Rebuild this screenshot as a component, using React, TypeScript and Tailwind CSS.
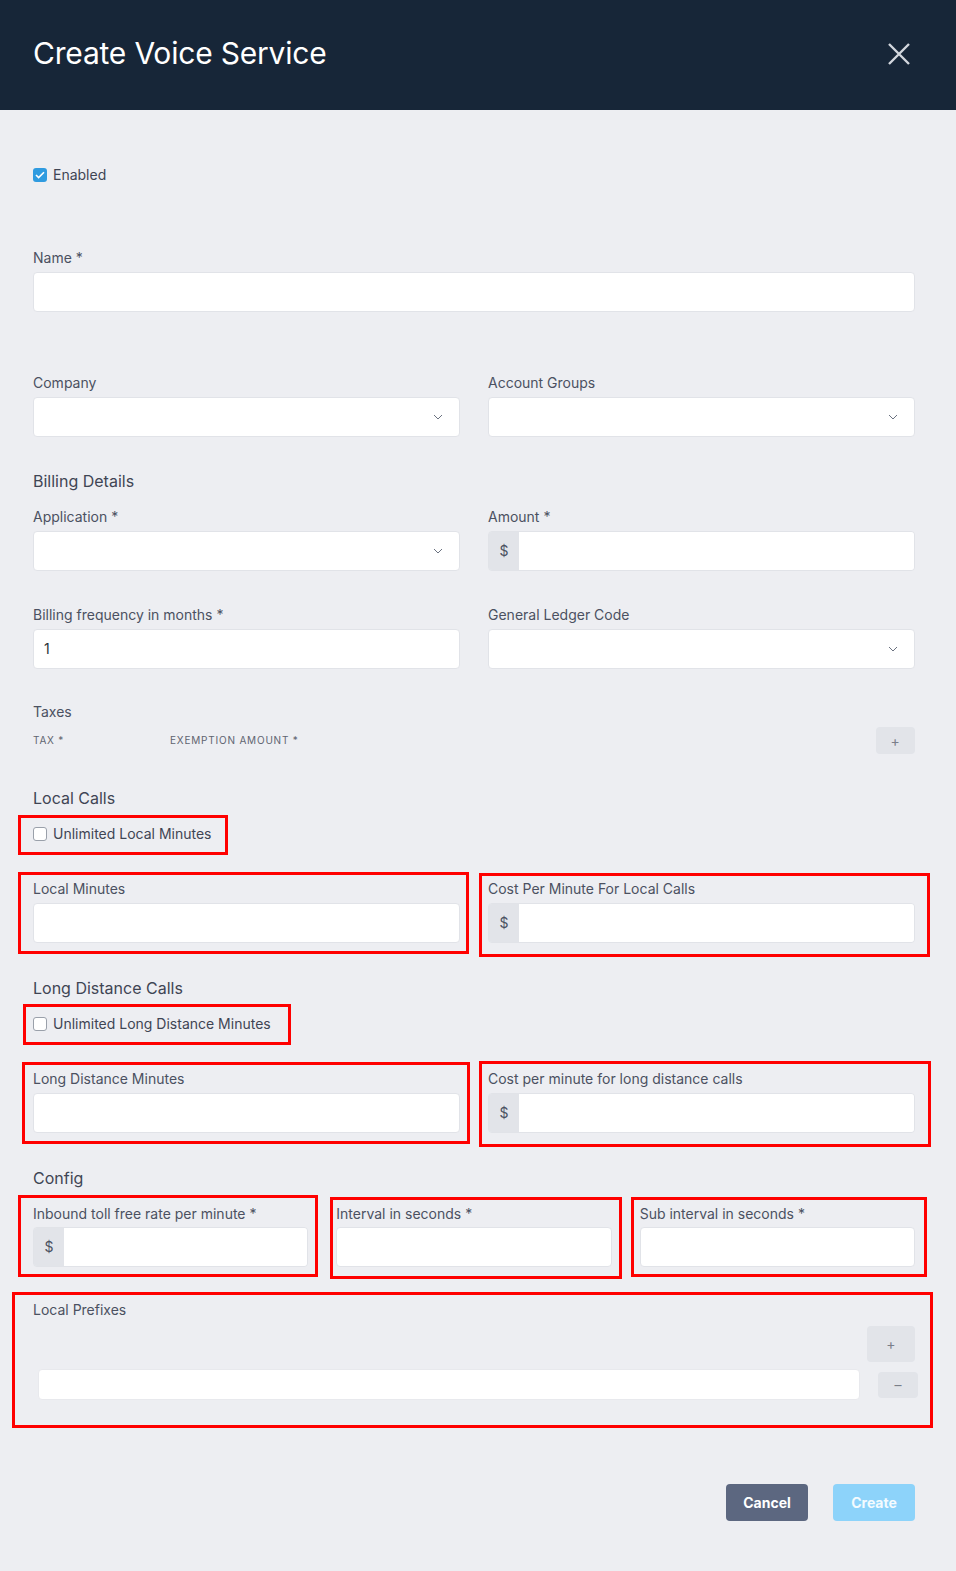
import React from 'react';

const font = { fontFamily: 'Inter, "Noto Sans", sans-serif' };

function Chevron() {
    return (
        <svg width="10" height="6" viewBox="0 0 10 6" className="text-[#6b7280]">
            <path d="M1 1l4 4 4-4" fill="none" stroke="currentColor" strokeWidth="1" />
        </svg>
    );
}

function Label({ children }: { children: React.ReactNode }) {
    return <div className="h-5 text-sm leading-5 text-[#4b5161] mb-1">{children}</div>;
}

function TextInput({ value }: { value?: string }) {
    return (
        <div className="h-10 w-full bg-white border border-[#e1e3e8] rounded flex items-center px-2.5 text-sm text-[#2b2f38]">
            {value}
        </div>
    );
}

function SelectInput() {
    return (
        <div className="h-10 w-full bg-white border border-[#e1e3e8] rounded flex items-center justify-end pr-4">
            <Chevron />
        </div>
    );
}

function MoneyInput() {
    return (
        <div className="h-10 w-full flex rounded border border-[#e1e3e8] overflow-hidden">
            <div className="w-[30px] bg-[#e2e4e9] flex items-center justify-center text-sm text-[#4b5161]">$</div>
            <div className="flex-1 bg-white" />
        </div>
    );
}

function Check({ checked, label }: { checked?: boolean; label: string }) {
    return (
        <div className="flex items-center h-5 gap-1.5 text-sm text-[#3f4554]">
            {checked ? (
                <span className="w-[14px] h-[14px] rounded-[3px] bg-[#2f9be0] flex items-center justify-center">
                    <svg width="10" height="8" viewBox="0 0 10 8">
                        <path d="M1 4l2.6 2.6L9 1.2" fill="none" stroke="white" strokeWidth="1.6" />
                    </svg>
                </span>
            ) : (
                <span className="w-[14px] h-[14px] rounded-[3px] bg-white border border-[#9aa0aa]" />
            )}
            <span>{label}</span>
        </div>
    );
}

function RedBox({ className }: { className: string }) {
    return <div className={`absolute pointer-events-none border-[3px] border-[#ff0000] ${className}`} />;
}

export default function App() {
    return (
        <div className="w-[956px] h-[1571px] bg-[#edeef2]" style={font}>
            <div className="h-[110px] bg-[#172638] flex items-center justify-between pl-[33px] pr-[45px]">
                <h1 className="text-[30px] text-white tracking-[-0.2px] pb-[4px]">Create Voice Service</h1>
                <svg width="24" height="24" viewBox="0 0 24 24" className="mb-[2px]">
                    <path d="M2 2l20 20M22 2L2 22" stroke="#d3d7dd" strokeWidth="2.4" fill="none" />
                </svg>
            </div>

            <div className="pl-[33px] pr-[41px] pt-[55px]">
                <Check checked label="Enabled" />

                <div className="mt-[63px]">
                    <Label>Name *</Label>
                    <TextInput />
                </div>

                <div className="mt-[61px] grid grid-cols-2 gap-7">
                    <div>
                        <Label>Company</Label>
                        <SelectInput />
                    </div>
                    <div>
                        <Label>Account Groups</Label>
                        <SelectInput />
                    </div>
                </div>

                <div className="mt-[32px] h-6 text-base leading-6 text-[#3f4554]">Billing Details</div>

                <div className="mt-[14px] grid grid-cols-2 gap-7">
                    <div>
                        <Label>Application *</Label>
                        <SelectInput />
                    </div>
                    <div>
                        <Label>Amount *</Label>
                        <MoneyInput />
                    </div>
                </div>

                <div className="mt-[34px] grid grid-cols-2 gap-7">
                    <div>
                        <Label>Billing frequency in months *</Label>
                        <TextInput value="1" />
                    </div>
                    <div>
                        <Label>General Ledger Code</Label>
                        <SelectInput />
                    </div>
                </div>

                <div className="mt-[33px] h-5 text-sm leading-5 text-[#4b5161]">Taxes</div>
                <div className="mt-[5px] flex items-center h-[27px] text-[10px] tracking-[0.8px] uppercase text-[#5f6470]">
                    <span className="w-[137px]">Tax *</span>
                    <span className="flex-1">Exemption Amount *</span>
                    <button className="w-[39px] h-[27px] rounded bg-[#e2e4e9] text-[#7a7f8a] text-sm">+</button>
                </div>

                <div className="mt-[32px] h-6 text-base leading-6 text-[#3f4554]">Local Calls</div>
                <div className="mt-[14px] relative w-fit">
                    <Check label="Unlimited Local Minutes" />
                    <RedBox className="-left-[15px] -top-[9px] w-[210px] h-[40px]" />
                </div>

                <div className="mt-[35px] grid grid-cols-2 gap-7">
                    <div className="relative">
                        <Label>Local Minutes</Label>
                        <TextInput />
                        <RedBox className="-left-[15px] -top-[7px] w-[451px] h-[82px]" />
                    </div>
                    <div className="relative">
                        <Label>Cost Per Minute For Local Calls</Label>
                        <MoneyInput />
                        <RedBox className="-left-[9px] -top-[6px] w-[451px] h-[84px]" />
                    </div>
                </div>

                <div className="mt-[33px] h-6 text-base leading-6 text-[#3f4554]">Long Distance Calls</div>
                <div className="mt-[14px] relative w-fit">
                    <Check label="Unlimited Long Distance Minutes" />
                    <RedBox className="-left-[10px] -top-[10px] w-[268px] h-[41px]" />
                </div>

                <div className="mt-[35px] grid grid-cols-2 gap-7">
                    <div className="relative">
                        <Label>Long Distance Minutes</Label>
                        <TextInput />
                        <RedBox className="-left-[11px] -top-[7px] w-[448px] h-[82px]" />
                    </div>
                    <div className="relative">
                        <Label>Cost per minute for long distance calls</Label>
                        <MoneyInput />
                        <RedBox className="-left-[9px] -top-[8px] w-[452px] h-[86px]" />
                    </div>
                </div>

                <div className="mt-[33px] h-6 text-base leading-6 text-[#3f4554]">Config</div>
                <div className="mt-[14px] grid grid-cols-3 gap-7">
                    <div className="relative">
                        <div className="h-5 text-sm leading-5 text-[#4b5161] mb-[3px]">Inbound toll free rate per minute *</div>
                        <MoneyInput />
                        <RedBox className="-left-[15px] -top-[9px] w-[300px] h-[82px]" />
                    </div>
                    <div className="relative">
                        <div className="h-5 text-sm leading-5 text-[#4b5161] mb-[3px]">Interval in seconds *</div>
                        <TextInput />
                        <RedBox className="-left-[6px] -top-[7px] w-[292px] h-[82px]" />
                    </div>
                    <div className="relative">
                        <div className="h-5 text-sm leading-5 text-[#4b5161] mb-[3px]">Sub interval in seconds *</div>
                        <TextInput />
                        <RedBox className="-left-[9px] -top-[7px] w-[296px] h-[80px]" />
                    </div>
                </div>

                <div className="mt-[33px] relative">
                    <div className="h-5 text-sm leading-5 text-[#4b5161]">Local Prefixes</div>
                    <div className="mt-[6px] flex justify-end">
                        <button className="w-12 h-9 rounded bg-[#e2e4e9] text-[#7a7f8a] text-sm">+</button>
                    </div>
                    <div className="mt-[7px] flex items-start pl-[5px] -mr-[3px] gap-[18px]">
                        <div className="flex-1 h-[31px] bg-white rounded border border-[#e8e9ed]" />
                        <button className="mt-[3px] w-10 h-[26px] rounded bg-[#e2e4e9] text-[#7a7f8a] text-sm leading-none">–</button>
                    </div>
                    <RedBox className="-left-[21px] -top-[8px] w-[921px] h-[136px]" />
                </div>

                <div className="mt-[84px] flex justify-end gap-[25px]">
                    <button className="w-[82px] h-[37px] rounded bg-[#5c6780] text-white text-sm font-bold">Cancel</button>
                    <button className="w-[82px] h-[37px] rounded bg-[#8dd3fa] text-white/90 text-sm font-bold">Create</button>
                </div>
            </div>
        </div>
    );
}
